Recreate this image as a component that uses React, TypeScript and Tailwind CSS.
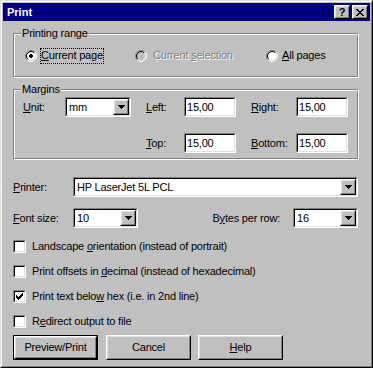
import React from 'react';

const FONT = "font-['Liberation_Sans',Arial,sans-serif]";

// win98 bevels
const Sunken: React.FC<{ className?: string; inner?: string; children?: React.ReactNode }> = ({ className = '', inner = 'bg-white', children }) => (
  <div className={`border border-t-[#808080] border-l-[#808080] border-r-white border-b-white ${className}`}>
    <div className={`h-full w-full border border-t-black border-l-black border-r-[#dfdfdf] border-b-[#dfdfdf] ${inner}`}>
      {children}
    </div>
  </div>
);

const Raised: React.FC<{ className?: string; children?: React.ReactNode }> = ({ className = '', children }) => (
  <div className={`border border-t-white border-l-white border-r-black border-b-black ${className}`}>
    <div className="h-full w-full border border-t-[#dfdfdf] border-l-[#dfdfdf] border-r-[#808080] border-b-[#808080] bg-[#c0c0c0] flex items-center justify-center">
      {children}
    </div>
  </div>
);

const Pixels: React.FC<{ w: number; h: number; rows: [number, number, number][]; className?: string }> = ({ w, h, rows, className }) => (
  <svg width={w} height={h} viewBox={`0 0 ${w} ${h}`} shapeRendering="crispEdges" className={className}>
    {rows.map(([y, x1, x2], i) => (
      <rect key={i} x={x1} y={y} width={x2 - x1 + 1} height={1} fill="black" />
    ))}
  </svg>
);

const Arrow = () => <Pixels w={7} h={4} rows={[[0, 0, 6], [1, 1, 5], [2, 2, 4], [3, 3, 3]]} />;

const CloseGlyph = () => (
  <Pixels
    w={8}
    h={7}
    rows={[
      [0, 0, 1], [0, 6, 7],
      [1, 1, 2], [1, 5, 6],
      [2, 2, 5],
      [3, 3, 4],
      [4, 2, 5],
      [5, 1, 2], [5, 5, 6],
      [6, 0, 1], [6, 6, 7],
    ]}
  />
);

const CheckGlyph = () => (
  <Pixels
    w={7}
    h={7}
    rows={[
      [0, 6, 6],
      [1, 5, 6],
      [2, 0, 0], [2, 4, 6],
      [3, 0, 1], [3, 3, 5],
      [4, 0, 4],
      [5, 1, 3],
      [6, 2, 2],
    ]}
  />
);

const Radio: React.FC<{ checked?: boolean; disabled?: boolean }> = ({ checked, disabled }) => (
  <svg width={12} height={12} viewBox="0 0 12 12" className="shrink-0">
    <circle cx={6} cy={6} r={4.2} fill={disabled ? '#c0c0c0' : 'white'} />
    <path d="M2.11 9.89 A5.5 5.5 0 0 1 9.89 2.11" stroke="#808080" fill="none" />
    <path d="M9.89 2.11 A5.5 5.5 0 0 1 2.11 9.89" stroke="white" fill="none" />
    <path d="M2.82 9.18 A4.5 4.5 0 0 1 9.18 2.82" stroke="black" fill="none" />
    <path d="M9.18 2.82 A4.5 4.5 0 0 1 2.82 9.18" stroke="#dfdfdf" fill="none" />
    {checked && (
      <g shapeRendering="crispEdges" fill="black">
        <rect x={5} y={4} width={2} height={1} />
        <rect x={4} y={5} width={4} height={2} />
        <rect x={5} y={7} width={2} height={1} />
      </g>
    )}
  </svg>
);

const Combo: React.FC<{ value: string; className: string }> = ({ value, className }) => (
  <Sunken className={`h-[20px] ${className}`} inner="bg-white flex items-center">
    <span className="flex-1 pl-[2px] whitespace-nowrap overflow-hidden">{value}</span>
    <Raised className="w-[16px] h-[16px] shrink-0">
      <Arrow />
    </Raised>
  </Sunken>
);

const Edit: React.FC<{ value: string }> = ({ value }) => (
  <Sunken className="h-[20px] w-[52px] shrink-0" inner="bg-white flex items-center">
    <span className="pl-[1px]">{value}</span>
  </Sunken>
);

const Group: React.FC<{ label: string; className: string; children: React.ReactNode }> = ({ label, className, children }) => (
  <div className={`relative w-[346px] border border-t-[#808080] border-l-[#808080] border-r-white border-b-white ${className}`}>
    <div className="h-full border border-t-white border-l-white border-r-[#808080] border-b-[#808080]">{children}</div>
    <span className="absolute -top-[7px] left-[7px] px-[1px] bg-[#c0c0c0] leading-[13px]">{label}</span>
  </div>
);

const Check: React.FC<{ checked?: boolean; children: React.ReactNode }> = ({ checked, children }) => (
  <div className="flex items-center h-[13px] mt-[12px]">
    <Sunken className="w-[13px] h-[13px] shrink-0" inner="bg-white flex items-center justify-center">
      {checked && <CheckGlyph />}
    </Sunken>
    <span className="ml-[6px] whitespace-nowrap">{children}</span>
  </div>
);

const Button: React.FC<{ isDefault?: boolean; className?: string; children: React.ReactNode }> = ({ isDefault, className = '', children }) =>
  isDefault ? (
    <div className={`w-[85px] h-[25px] border border-black ${className}`}>
      <Raised className="h-full w-full">{children}</Raised>
    </div>
  ) : (
    <Raised className={`w-[85px] h-[25px] ${className}`}>{children}</Raised>
  );

const U: React.FC<{ children: React.ReactNode }> = ({ children }) => <span className="underline">{children}</span>;

export default function App() {
  return (
    <div className={`w-[373px] h-[368px] bg-[#c0c0c0] border border-t-[#dfdfdf] border-l-[#dfdfdf] border-r-black border-b-black text-[11px] tracking-[-0.2px] text-black ${FONT}`}>
      <div className="h-full border border-t-white border-l-white border-r-[#808080] border-b-[#808080] p-[1px] flex flex-col">
        {/* title bar */}
        <div className="h-[18px] bg-[#000080] flex items-center pl-[4px] pr-[2px] shrink-0">
          <span className="text-white font-bold tracking-normal flex-1">Print</span>
          <Raised className="w-[16px] h-[14px]">
            <span className="font-bold text-[11px] leading-none tracking-normal">?</span>
          </Raised>
          <Raised className="w-[16px] h-[14px] ml-[2px]">
            <CloseGlyph />
          </Raised>
        </div>

        <div className="pl-[10px] pt-[12px] flex flex-col">
          <Group label="Printing range" className="h-[45px]">
            <div className="h-full flex items-center pl-[10px]">
              <div className="w-[110px] flex items-center">
                <Radio checked />
                <span className="ml-[3px] h-[16px] flex items-center border border-dotted border-black whitespace-nowrap">
                  <U>C</U>urrent page
                </span>
              </div>
              <div className="w-[131px] flex items-center">
                <Radio disabled />
                <span className="ml-[6px] text-[#808080] [text-shadow:1px_1px_0_#fff] whitespace-nowrap">
                  Current <U>s</U>election
                </span>
              </div>
              <div className="flex items-center">
                <Radio />
                <span className="ml-[4px] whitespace-nowrap">
                  <U>A</U>ll pages
                </span>
              </div>
            </div>
          </Group>

          <Group label="Margins" className="h-[71px] mt-[11px]">
            <div className="pl-[8px] pt-[6px] flex flex-col">
              <div className="flex items-center h-[20px]">
                <span className="w-[42px]">
                  <U>U</U>nit:
                </span>
                <Combo value="mm" className="w-[66px]" />
                <span className="w-[38px] ml-[15px]">
                  <U>L</U>eft:
                </span>
                <Edit value="15,00" />
                <span className="w-[45px] ml-[15px]">
                  <U>R</U>ight:
                </span>
                <Edit value="15,00" />
              </div>
              <div className="flex items-center h-[20px] mt-[16px]">
                <span className="w-[42px]" />
                <span className="w-[66px]" />
                <span className="w-[38px] ml-[15px]">
                  <U>T</U>op:
                </span>
                <Edit value="15,00" />
                <span className="w-[45px] ml-[15px]">
                  <U>B</U>ottom:
                </span>
                <Edit value="15,00" />
              </div>
            </div>
          </Group>

          <div className="flex items-center mt-[17px] h-[20px]">
            <span className="w-[60px]">
              <U>P</U>rinter:
            </span>
            <Combo value="HP LaserJet 5L PCL" className="w-[285px]" />
          </div>

          <div className="flex items-center mt-[11px] h-[20px] w-[346px]">
            <span className="w-[60px]">
              <U>F</U>ont size:
            </span>
            <Combo value="10" className="w-[65px]" />
            <span className="flex-1 text-right pr-[13px]">
              B<U>y</U>tes per row:
            </span>
            <Combo value="16" className="w-[65px] mr-[1px]" />
          </div>

          <Check>
            Landscape <U>o</U>rientation (instead of portrait)
          </Check>
          <Check>
            Print offsets in <U>d</U>ecimal (instead of hexadecimal)
          </Check>
          <Check checked>
            Print text belo<U>w</U> hex (i.e. in 2nd line)
          </Check>
          <Check>
            R<U>e</U>direct output to file
          </Check>

          <div className="flex mt-[7px]">
            <Button isDefault>Preview/Print</Button>
            <Button className="ml-[8px]">Cancel</Button>
            <Button className="ml-[7px]">
              <span>
                <U>H</U>elp
              </span>
            </Button>
          </div>
        </div>
      </div>
    </div>
  );
}
